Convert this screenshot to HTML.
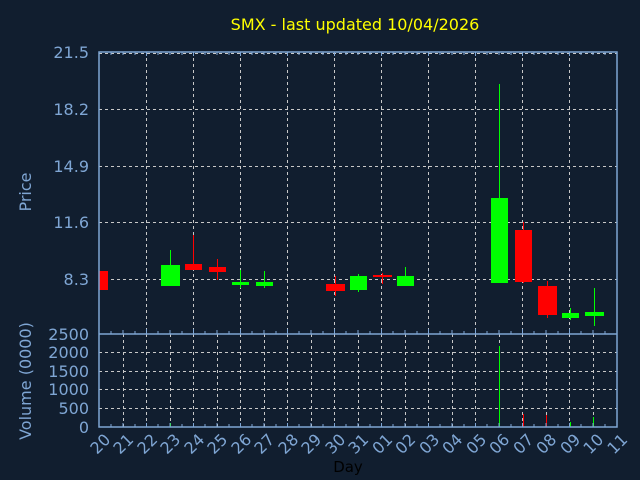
<!DOCTYPE html>
<html><head><meta charset="utf-8"><style>
html,body{margin:0;padding:0;background:#111e2f;}
svg{display:block;font-family:"DejaVu Sans","Liberation Sans",sans-serif;}
</style></head><body>
<svg width="640" height="480" viewBox="0 0 640 480">
<rect width="640" height="480" fill="#111e2f"/>
<text x="355" y="30" fill="#ffff00" font-size="16" text-anchor="middle">SMX - last updated 10/04/2026</text>
<g stroke="#c8c8c8" stroke-dasharray="3,3" stroke-width="1">
<line x1="99" y1="53.5" x2="617" y2="53.5"/>
<line x1="99" y1="109.5" x2="617" y2="109.5"/>
<line x1="99" y1="166.5" x2="617" y2="166.5"/>
<line x1="99" y1="222.5" x2="617" y2="222.5"/>
<line x1="99" y1="279.5" x2="617" y2="279.5"/>
<line x1="146.5" y1="52" x2="146.5" y2="334"/><line x1="193.5" y1="52" x2="193.5" y2="334"/>
<line x1="240.5" y1="52" x2="240.5" y2="334"/><line x1="287.5" y1="52" x2="287.5" y2="334"/>
<line x1="334.5" y1="52" x2="334.5" y2="334"/><line x1="381.5" y1="52" x2="381.5" y2="334"/>
<line x1="428.5" y1="52" x2="428.5" y2="334"/><line x1="475.5" y1="52" x2="475.5" y2="334"/>
<line x1="522.5" y1="52" x2="522.5" y2="334"/><line x1="569.5" y1="52" x2="569.5" y2="334"/>
<line x1="99" y1="352.5" x2="617" y2="352.5"/>
<line x1="99" y1="371.5" x2="617" y2="371.5"/>
<line x1="99" y1="389.5" x2="617" y2="389.5"/>
<line x1="99" y1="408.5" x2="617" y2="408.5"/>
<line x1="123.5" y1="334" x2="123.5" y2="427"/><line x1="146.5" y1="334" x2="146.5" y2="427"/>
<line x1="170.5" y1="334" x2="170.5" y2="427"/><line x1="193.5" y1="334" x2="193.5" y2="427"/>
<line x1="217.5" y1="334" x2="217.5" y2="427"/><line x1="240.5" y1="334" x2="240.5" y2="427"/>
<line x1="264.5" y1="334" x2="264.5" y2="427"/><line x1="287.5" y1="334" x2="287.5" y2="427"/>
<line x1="311.5" y1="334" x2="311.5" y2="427"/><line x1="334.5" y1="334" x2="334.5" y2="427"/>
<line x1="358.5" y1="334" x2="358.5" y2="427"/><line x1="381.5" y1="334" x2="381.5" y2="427"/>
<line x1="405.5" y1="334" x2="405.5" y2="427"/><line x1="428.5" y1="334" x2="428.5" y2="427"/>
<line x1="452.5" y1="334" x2="452.5" y2="427"/><line x1="475.5" y1="334" x2="475.5" y2="427"/>
<line x1="499.5" y1="334" x2="499.5" y2="427"/><line x1="522.5" y1="334" x2="522.5" y2="427"/>
<line x1="546.5" y1="334" x2="546.5" y2="427"/><line x1="569.5" y1="334" x2="569.5" y2="427"/>
<line x1="593.5" y1="334" x2="593.5" y2="427"/>
</g>
<g stroke-width="1">
<rect x="99" y="271" width="9" height="19" fill="#ff0000"/>
<line x1="170.5" y1="250" x2="170.5" y2="265" stroke="#00ff00"/><rect x="161" y="265" width="19" height="21" fill="#00ff00"/>
<line x1="193.5" y1="235" x2="193.5" y2="270" stroke="#ff0000"/><rect x="185" y="264" width="17" height="6" fill="#ff0000"/>
<line x1="217.5" y1="259" x2="217.5" y2="280" stroke="#ff0000"/><rect x="209" y="267" width="17" height="5" fill="#ff0000"/>
<line x1="240.5" y1="270" x2="240.5" y2="288" stroke="#00ff00"/><rect x="232" y="282" width="17" height="3" fill="#00ff00"/>
<line x1="264.5" y1="271" x2="264.5" y2="288" stroke="#00ff00"/><rect x="256" y="282" width="17" height="4" fill="#00ff00"/>
<line x1="335.5" y1="276" x2="335.5" y2="296" stroke="#ff0000"/><rect x="326" y="284" width="19" height="7" fill="#ff0000"/>
<line x1="358.5" y1="274" x2="358.5" y2="292" stroke="#00ff00"/><rect x="350" y="276" width="17" height="14" fill="#00ff00"/>
<line x1="382.5" y1="273" x2="382.5" y2="284" stroke="#ff0000"/><rect x="373" y="275" width="19" height="2" fill="#ff0000"/>
<line x1="405.5" y1="267" x2="405.5" y2="276" stroke="#00ff00"/><rect x="397" y="276" width="17" height="10" fill="#00ff00"/>
<line x1="499.5" y1="84" x2="499.5" y2="198" stroke="#00ff00"/><rect x="491" y="198" width="17" height="85" fill="#00ff00"/>
<line x1="523.5" y1="222" x2="523.5" y2="283" stroke="#ff0000"/><rect x="515" y="230" width="17" height="52" fill="#ff0000"/>
<line x1="547.5" y1="281" x2="547.5" y2="318" stroke="#ff0000"/><rect x="538" y="286" width="19" height="29" fill="#ff0000"/>
<line x1="570.5" y1="308" x2="570.5" y2="320" stroke="#00ff00"/><rect x="562" y="313" width="17" height="5" fill="#00ff00"/>
<line x1="594.5" y1="288" x2="594.5" y2="326" stroke="#00ff00"/><rect x="585" y="312" width="19" height="4" fill="#00ff00"/>
<line x1="499.5" y1="346" x2="499.5" y2="427" stroke="#00ff00"/>
<line x1="523.5" y1="414" x2="523.5" y2="427" stroke="#ff0000"/>
<line x1="546.5" y1="415" x2="546.5" y2="427" stroke="#ff0000"/>
<line x1="570.5" y1="422" x2="570.5" y2="427" stroke="#00ff00"/>
<line x1="593.5" y1="417" x2="593.5" y2="427" stroke="#00ff00"/>
<line x1="170.5" y1="423" x2="170.5" y2="427" stroke="#00ff00"/>
</g>
<g stroke="#7fa6d4" stroke-width="1.5" fill="none">
<rect x="99" y="52" width="518" height="375"/>
<line x1="99" y1="334" x2="617" y2="334"/>
</g>
<g stroke="#7fa6d4" stroke-width="1">
<path d="M111 334v-3M123 334v-4M135 334v-3M146.5 334v-5M158 334v-3M170 334v-4M182 334v-3M193.5 334v-5M205 334v-3M217 334v-4M229 334v-3M240.5 334v-5M252 334v-3M264 334v-4M276 334v-3M287.5 334v-5M299 334v-3M311 334v-4M323 334v-3M334.5 334v-5M346 334v-3M358 334v-4M370 334v-3M381.5 334v-5M393 334v-3M405 334v-4M417 334v-3M428.5 334v-5M440 334v-3M452 334v-4M464 334v-3M475.5 334v-5M487 334v-3M499 334v-4M511 334v-3M522.5 334v-5M534 334v-3M546 334v-4M558 334v-3M569.5 334v-5M581 334v-3M593 334v-4M605 334v-3"/>
<path d="M111 427v-3M123 427v-4M135 427v-3M146.5 427v-4M158 427v-3M170 427v-4M182 427v-3M193.5 427v-4M205 427v-3M217 427v-4M229 427v-3M240.5 427v-4M252 427v-3M264 427v-4M276 427v-3M287.5 427v-4M299 427v-3M311 427v-4M323 427v-3M334.5 427v-4M346 427v-3M358 427v-4M370 427v-3M381.5 427v-4M393 427v-3M405 427v-4M417 427v-3M428.5 427v-4M440 427v-3M452 427v-4M464 427v-3M475.5 427v-4M487 427v-3M499 427v-4M511 427v-3M522.5 427v-4M534 427v-3M546 427v-4M558 427v-3M569.5 427v-4M581 427v-3M593 427v-4M605 427v-3"/>
<path d="M111 52v3M123 52v3M135 52v3M146.5 52v4M158 52v3M170 52v3M182 52v3M193.5 52v4M205 52v3M217 52v3M229 52v3M240.5 52v4M252 52v3M264 52v3M276 52v3M287.5 52v4M299 52v3M311 52v3M323 52v3M334.5 52v4M346 52v3M358 52v3M370 52v3M381.5 52v4M393 52v3M405 52v3M417 52v3M428.5 52v4M440 52v3M452 52v3M464 52v3M475.5 52v4M487 52v3M499 52v3M511 52v3M522.5 52v4M534 52v3M546 52v3M558 52v3M569.5 52v4M581 52v3M593 52v3M605 52v3"/>
</g>
<g fill="#7fa6d4" font-size="16" text-anchor="end">
<text x="89" y="58">21.5</text><text x="89" y="115">18.2</text><text x="89" y="172">14.9</text>
<text x="89" y="228">11.6</text><text x="89" y="285">8.3</text>
<text x="89" y="340">2500</text><text x="89" y="358">2000</text><text x="89" y="377">1500</text>
<text x="89" y="395">1000</text><text x="89" y="414">500</text><text x="89" y="433">0</text>
</g>
<text transform="translate(31,192) rotate(-90)" fill="#7fa6d4" font-size="16" text-anchor="middle">Price</text>
<text transform="translate(31,381) rotate(-90)" fill="#7fa6d4" font-size="16" text-anchor="middle">Volume (0000)</text>
<text x="348" y="472" fill="#000" font-size="15" text-anchor="middle">Day</text>
<g fill="#7fa6d4" font-size="16">
<text transform="translate(97,455) rotate(-45)">20</text>
<text transform="translate(120,455) rotate(-45)">21</text>
<text transform="translate(144,455) rotate(-45)">22</text>
<text transform="translate(167,455) rotate(-45)">23</text>
<text transform="translate(191,455) rotate(-45)">24</text>
<text transform="translate(214,455) rotate(-45)">25</text>
<text transform="translate(238,455) rotate(-45)">26</text>
<text transform="translate(261,455) rotate(-45)">27</text>
<text transform="translate(285,455) rotate(-45)">28</text>
<text transform="translate(308,455) rotate(-45)">29</text>
<text transform="translate(332,455) rotate(-45)">30</text>
<text transform="translate(355,455) rotate(-45)">31</text>
<text transform="translate(379,455) rotate(-45)">01</text>
<text transform="translate(402,455) rotate(-45)">02</text>
<text transform="translate(426,455) rotate(-45)">03</text>
<text transform="translate(449,455) rotate(-45)">04</text>
<text transform="translate(473,455) rotate(-45)">05</text>
<text transform="translate(496,455) rotate(-45)">06</text>
<text transform="translate(520,455) rotate(-45)">07</text>
<text transform="translate(543,455) rotate(-45)">08</text>
<text transform="translate(567,455) rotate(-45)">09</text>
<text transform="translate(590,455) rotate(-45)">10</text>
<text transform="translate(614,455) rotate(-45)">11</text>
</g>
</svg>
</body></html>
